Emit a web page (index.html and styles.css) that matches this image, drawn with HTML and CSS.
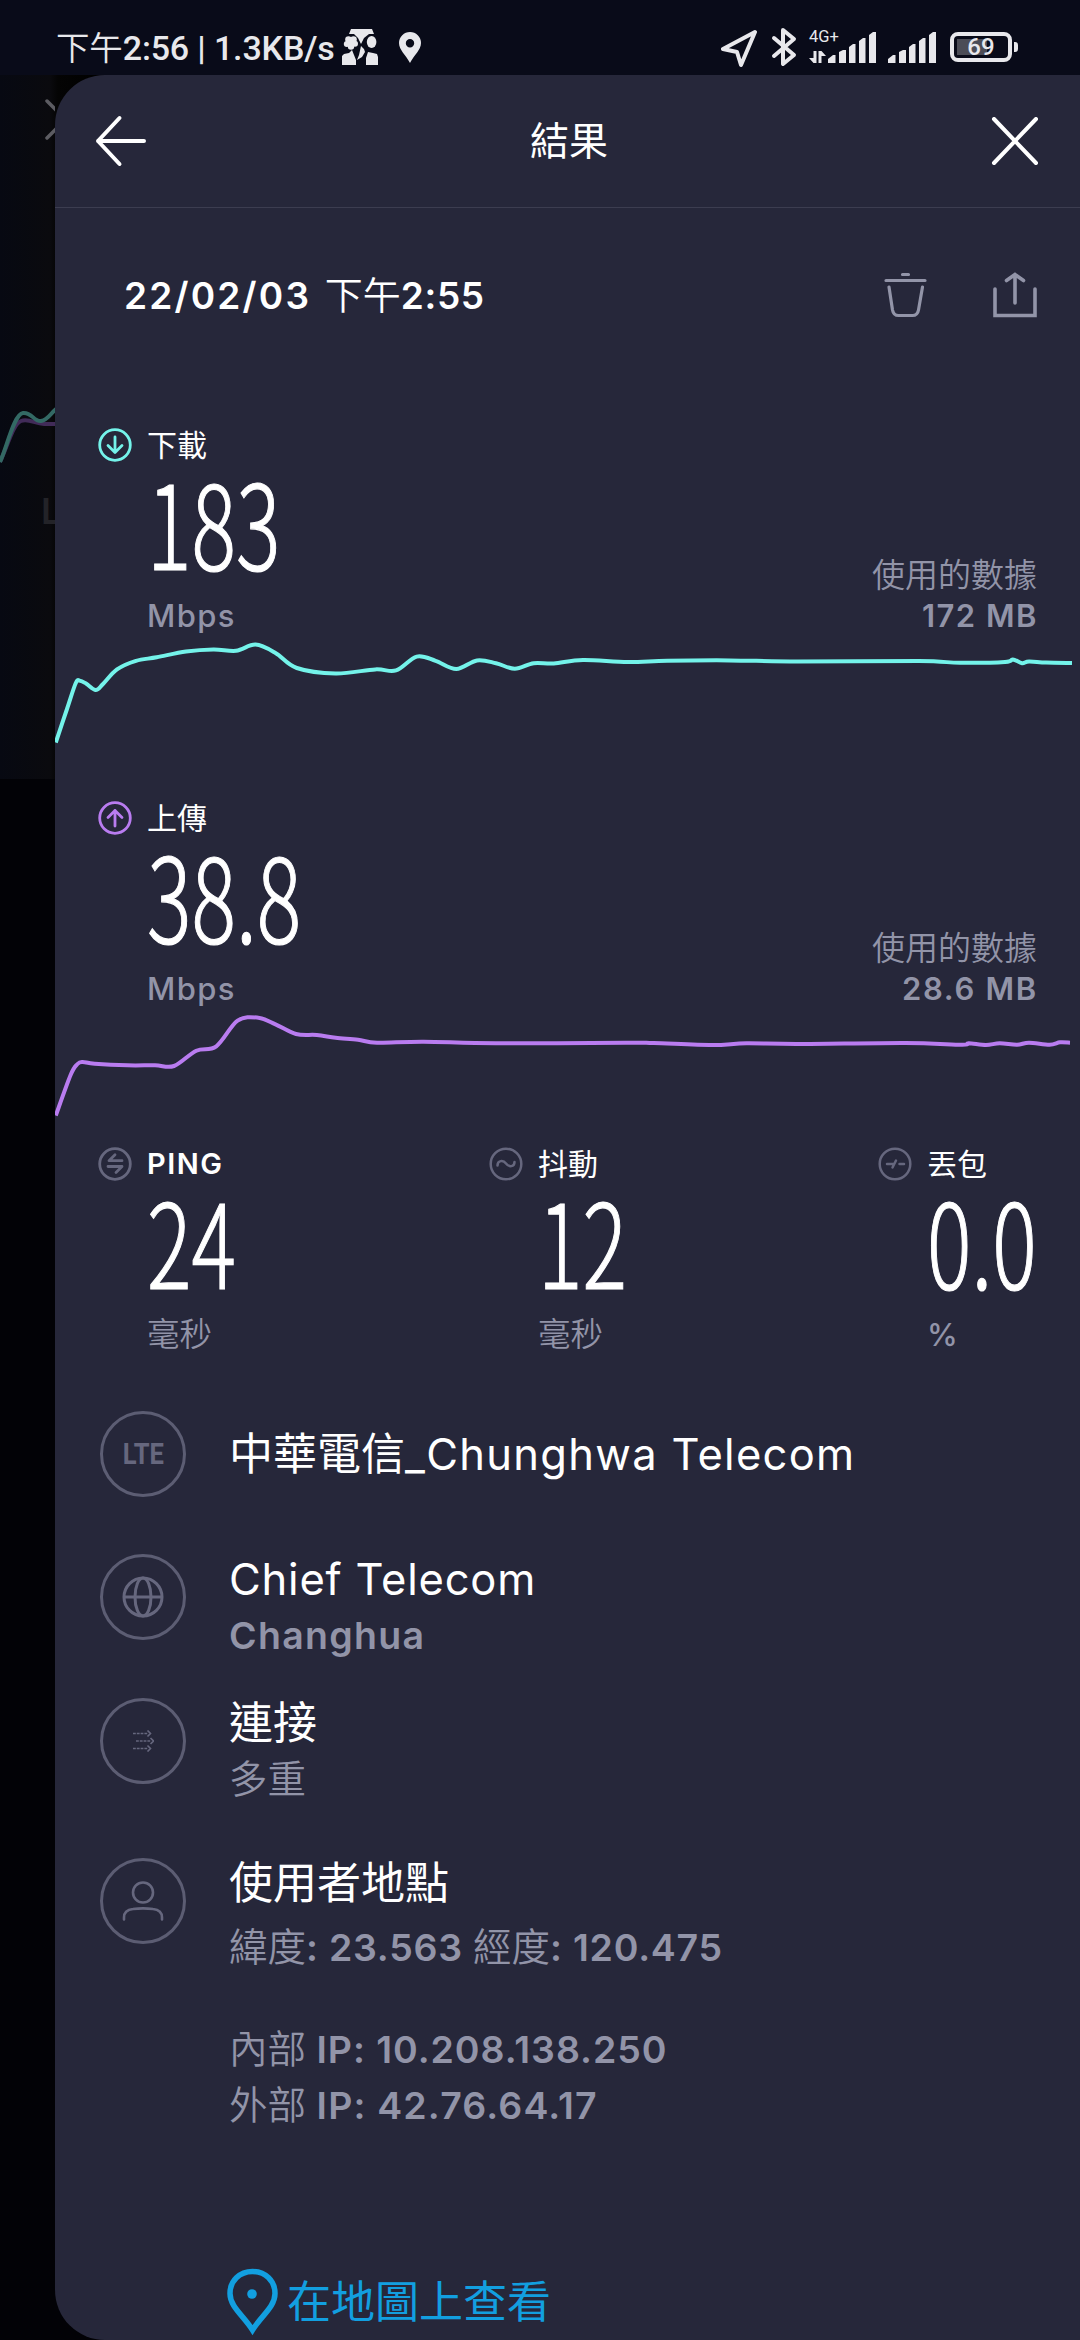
FILE: index.html
```html
<!DOCTYPE html>
<html lang="zh-Hant">
<head>
<meta charset="utf-8">
<title>結果</title>
<link rel="stylesheet" href="styles.css">
</head>
<body>
<div class="phone">
  <header class="status">
    <div class="status-left">
      <span class="clock"><span class="clock-cjk">下午</span>2:56 | 1.3KB/s</span>
      <svg class="ico-app" width="36" height="36" viewBox="0 0 36 36" fill="#e8e8ec">
        <path d="M9 0h21l2 5h-5l-5 4-3 6-3-6-4-4H7z"/>
        <circle cx="6.500" cy="10.500" r="3.300"/><circle cx="11.500" cy="10.500" r="3.300"/><circle cx="4.800" cy="15" r="3"/><circle cx="13" cy="14.800" r="3"/><circle cx="9" cy="17.500" r="3.200"/><circle cx="9" cy="13.500" r="4"/>
        <ellipse cx="29.600" cy="13" rx="4.800" ry="6"/>
        <path d="M19 17l3 3 1 3-3 5-5 3 2-5z"/>
        <path d="M0 36v-9l2-2 5-1 3-3 2 5 2 5v5zM24 36v-7l2-6 5 1 4 1 1 3v8z"/>
      </svg>
      <svg class="ico-pin" width="22" height="31" viewBox="0 0 22 31"><path fill="#e8e8ec" fill-rule="evenodd" d="M11 0a11 11 0 0 1 11 11c0 7-7 12-11 20C7 23 0 18 0 11A11 11 0 0 1 11 0zm0 7a4.200 4.200 0 1 0 0 8.400a4.200 4.200 0 0 0 0-8.400z"/></svg>
    </div>
    <div class="status-right">
      <svg width="37" height="39" viewBox="0 0 37 39" fill="none" stroke="#e8e8ec" stroke-width="4" stroke-linejoin="round"><path d="M34 3L2 20l14 3 4 13z"/></svg>
      <svg class="ico-bt" width="26" height="40" viewBox="0 0 26 40" fill="none" stroke="#e8e8ec" stroke-width="4" stroke-linejoin="round" stroke-linecap="round"><path d="M3 11l20 17-11 9V3l11 9L3 29"/></svg>
      <div class="cell">
        <span class="net">4G+</span>
        <svg width="17" height="12" viewBox="0 0 17 12" fill="#e8e8ec"><path d="M4.500 0h3v12h-3L0 7h4.500zM9.500 12h3V5H17l-4.500-5h-3z"/></svg>
      </div>
      <svg class="bars" width="48" height="31" viewBox="0 0 48 31" fill="#e8e8ec"><path d="M0 31v-4l5-4h2.500v8zM11 31V20l4-2h3v13zM21 31V15l4-3h2.500v19zM31 31V9l4-3h2.500v25zM41 31V3l4-3h3v31z"/></svg>
      <svg class="bars second" width="48" height="31" viewBox="0 0 48 31" fill="#e8e8ec"><path d="M0 31v-4l5-4h2.500v8zM11 31V20l4-2h3v13zM21 31V15l4-3h2.500v19zM31 31V9l4-3h2.500v25zM41 31V3l4-3h3v31z"/></svg>
      <div class="battery"><span class="level">69</span></div>
      <div class="nub"></div>
    </div>
  </header>

  <div class="stage">
    <aside class="under">
      <svg width="55" height="704" viewBox="0 75 55 704" fill="none">
        <path d="M47 101l9 9M47 138l9-9" stroke="#5c5c62" stroke-width="3.500" stroke-linecap="round"/>
        <path d="M0 462C8 445 13 424 21 421S35 424 44 424H56" stroke="#412b58" stroke-width="4"/>
        <path d="M0 462C7 447 14 414 23 413S34 422 41 421 50 414 56 409" stroke="#336964" stroke-width="4"/>
      </svg>
      <span class="ghost">L</span>
    </aside>

    <main class="sheet">
      <div class="bar">
        <svg width="52" height="52" viewBox="0 0 52 52" fill="none" stroke="#fff" stroke-width="4" stroke-linecap="round" stroke-linejoin="round"><path d="M49 26H3M24.500 3L3 26l21.500 23"/></svg>
        <h1>結果</h1>
        <svg width="48" height="48" viewBox="0 0 48 48" fill="none" stroke="#fff" stroke-width="4" stroke-linecap="round"><path d="M3 2l42 44M45 2L3 46"/></svg>
      </div>

      <div class="when">
        <div class="date"><span class="d1">22/02/03</span> 下午<span class="d2">2:55</span></div>
        <svg class="trash" width="43" height="46" viewBox="0 0 43 46" fill="none" stroke="#9294a8" stroke-width="3.200" stroke-linecap="round"><path d="M18.500 2.500h6M2 8.500h39M5 15l3.500 23q1 5.500 6 5.500h14q5 0 6-5.500L38.500 15"/></svg>
        <svg width="44" height="46" viewBox="0 0 44 46" fill="none" stroke="#9294a8" stroke-width="3.600" stroke-linecap="round"><path d="M2 17v26.500h40V17M22 31V2.500M13.500 8.500l8.500-6 8.500 6"/></svg>
      </div>

      <section class="speed">
        <div class="label">
          <svg class="ring" width="34" height="34" viewBox="0 0 34 34" fill="none" stroke="#74f3ea" stroke-width="2.800" stroke-linecap="round" stroke-linejoin="round"><circle cx="17" cy="17" r="15.300"/><path d="M17 9v15.500M10 17.500l7 7 7-7"/></svg>
          <span>下載</span>
        </div>
        <div class="num">183</div>
        <div class="foot"><span class="unit">Mbps</span><div class="used"><span class="cap">使用的數據</span><span class="mb mb-a">172 MB</span></div></div>
        <svg class="chart" width="1025" height="110" viewBox="55 640 1025 110"><path class="line down" data-points="55.8,742.500 67,709 75.800,683 80,680.700 86,683.500 95.700,690 103,684 117,669.400 136,660.800 156.700,657.300 186,651.500 213.500,649.400 236,650.800 255.500,644.600 275.500,652.900 296.800,668 335.700,673.500 375.300,669.400 396,670.400 416.700,656.600 435.600,660.800 456.300,669 477,660.400 496,663.200 514.800,668.700 533.700,663.200 553.800,663.500 583,660 627.800,662.100 667.400,660.800 729.400,660.400 798,661.500 918.800,661 960,662.800 1005,662 1012.800,659.400 1022,663.200 1029,661.500 1046,662.500 1072,663"/></svg>
      </section>

      <section class="speed">
        <div class="label">
          <svg class="ring" width="34" height="34" viewBox="0 0 34 34" fill="none" stroke="#b97cf0" stroke-width="2.800" stroke-linecap="round" stroke-linejoin="round"><circle cx="17" cy="17" r="15.300"/><path d="M17 25V9.500M10 16.500l7-7 7 7"/></svg>
          <span>上傳</span>
        </div>
        <div class="num">38.8</div>
        <div class="foot"><span class="unit">Mbps</span><div class="used"><span class="cap">使用的數據</span><span class="mb mb-b">28.6 MB</span></div></div>
        <svg class="chart" width="1025" height="110" viewBox="55 1013 1025 110"><path class="line up" data-points="55.8,1115.500 70.600,1075 77.500,1064 82.600,1062 94.700,1063.700 127.400,1065.300 155,1065.300 174,1066 196.300,1050.700 216.300,1046.300 237.600,1020.700 258.300,1017.700 275.500,1024.300 296,1034 316.800,1035 335.700,1037.700 358,1039.700 377,1042.700 423.500,1041.700 496,1043.300 626,1042.700 653.600,1043 712,1045 746.600,1043.300 798,1044 905,1043 961.800,1044.700 968.700,1043.300 986,1045 999.700,1043.300 1017,1044.700 1029,1042.700 1049.600,1044.700 1060,1042.300 1070,1042.700"/></svg>
      </section>

      <section class="stats">
        <div>
          <div class="label"><svg class="ring" width="34" height="34" viewBox="0 0 34 34" fill="none" stroke="#66677e" stroke-width="2.800" stroke-linecap="round" stroke-linejoin="round"><circle cx="17" cy="17" r="15.300"/><path d="M24 13.700H11l6-6M10 19.500h14l-6 6"/></svg><span class="ping">PING</span></div>
          <div class="num">24</div>
          <div class="munit">毫秒</div>
        </div>
        <div>
          <div class="label"><svg class="ring" width="34" height="34" viewBox="0 0 34 34" fill="none" stroke="#66677e" stroke-width="2.500" stroke-linecap="round"><circle cx="17" cy="17" r="15.300"/><path d="M8.500 18.500c0-5 5.500-6 8.500-2s8.500 3.500 8.500-1.500"/></svg><span>抖動</span></div>
          <div class="num">12</div>
          <div class="munit">毫秒</div>
        </div>
        <div>
          <div class="label"><svg class="ring" width="34" height="34" viewBox="0 0 34 34" fill="none" stroke="#66677e" stroke-width="2.500" stroke-linecap="round"><circle cx="17" cy="17" r="15.300"/><path d="M9 17h6M14.500 20.500l3.500-7M21.500 17H26"/></svg><span>丟包</span></div>
          <div class="num">0.0</div>
          <div class="munit pct">%</div>
        </div>
      </section>

      <section class="info">
        <div class="row r1">
          <div class="disc"><span class="lte">LTE</span></div>
          <div class="text"><div class="big">中華電信<span class="name-a">_Chunghwa Telecom</span></div></div>
        </div>
        <div class="row r2">
          <div class="disc"><svg width="42" height="42" viewBox="0 0 42 42" fill="none" stroke="#66677e" stroke-width="3"><circle cx="21" cy="21" r="19"/><ellipse cx="21" cy="21" rx="8" ry="19"/><path d="M2 21h38"/></svg></div>
          <div class="text"><div class="big"><span class="name-b">Chief Telecom</span></div><div class="sub"><span class="place">Changhua</span></div></div>
        </div>
        <div class="row r3">
          <div class="disc"><svg width="22" height="22" viewBox="0 0 22 22" fill="none" stroke="#66677e" stroke-width="1.600"><path d="M1 3.500h15M4 11h15M1 18.500h15" stroke-dasharray="2.800 1"/><path d="M15.500 .5l3 3-3 3M18.500 8l3 3-3 3M15.500 15.500l3 3-3 3"/></svg></div>
          <div class="text"><div class="big">連接</div><div class="sub">多重</div></div>
        </div>
        <div class="row r4">
          <div class="disc"><svg width="44" height="42" viewBox="0 0 44 42" fill="none" stroke="#66677e" stroke-width="2.600" stroke-linecap="round"><circle cx="22" cy="12.500" r="10"/><path d="M3 39.500v-2c0-6 4-8 9-8.500q10-1.300 20 0c5 .5 9 2.500 9 8.500v2"/></svg></div>
          <div class="text">
            <div class="big">使用者地點</div>
            <div class="sub">緯度<span class="geo">: 23.563 </span>經度<span class="geo">: 120.475</span></div>
            <div class="sub ip first">內部<span class="geo ip-a"> IP: 10.208.138.250</span></div>
            <div class="sub ip">外部<span class="geo ip-b"> IP: 42.76.64.17</span></div>
            <a class="map"><svg width="53" height="68" viewBox="0 0 53 68"><path d="M26.500 3.500C13.500 3.500 4 13 4 25.500 4 39 18 48 26.500 62 35 48 49 39 49 25.500 49 13 39.500 3.500 26.500 3.500z" fill="none" stroke="#129fe0" stroke-width="5.500"/><circle cx="26" cy="26" r="4.800" fill="#129fe0"/></svg><span>在地圖上查看</span></a>
          </div>
        </div>
      </section>
    </main>
  </div>
</div>
<script src="chart.js"></script>
</body>
</html>
```
FILE: styles.css
```css
* { box-sizing: border-box; margin: 0; padding: 0; }
body { width: 1080px; background: #020206; font-family: "Inter", "Noto Sans CJK TC", sans-serif; color: #fff; }
svg { display: block; flex: none; }
.phone { width: 1080px; height: 2340px; display: flex; flex-direction: column; overflow: hidden; }

.status { height: 75px; flex: none; background: #090b19; display: flex; justify-content: space-between; color: #e8e8ec; font-family: "Roboto", "Noto Sans CJK TC", sans-serif; }
.status-left { display: flex; padding-left: 56px; }
.clock { font-size: 34px; font-weight: 500; line-height: 40px; margin-top: 28px; width: 278px; white-space: nowrap; letter-spacing: -0.15px; }
.clock-cjk { font-family: "Noto Sans CJK TC", sans-serif; font-size: 33.500px; font-weight: 350; line-height: 1; }
.ico-app { margin: 29px 0 0 8px; }
.ico-pin { margin: 32px 0 0 21px; }
.status-right { display: flex; padding-right: 62px; }
.status-right > svg { margin-top: 29px; }
.status-right > .ico-bt { margin: 27px 0 0 13px; }
.cell { width: 31px; height: 34px; margin: 29px 0 0 12px; display: flex; flex-direction: column; justify-content: space-between; }
.net { font-size: 16.500px; line-height: 16px; white-space: nowrap; }
.status-right > .bars { margin: 32px 0 0 -12px; }
.status-right > .bars.second { margin-left: 12px; }
.battery { width: 62px; height: 30px; margin: 32px 0 0 14px; border: 4px solid #e8e8ec; border-radius: 8px; display: flex; align-items: center; justify-content: center; background: linear-gradient(#4b4c56, #4b4c56) 3px 3px / 30px 16px no-repeat; }
.level { font-size: 24px; font-weight: 500; line-height: 24px; }
.nub { width: 4px; height: 10px; margin: 42px 0 0 2px; border-radius: 0 3px 3px 0; background: #e8e8ec; }

.stage { display: grid; grid-template-columns: 55px 1025px; height: 2265px; flex: none; background: #020206; }
.under { position: relative; height: 704px; width: 105px; background: linear-gradient(90deg, #070912, #0a0a0e 50px, #040404 58px, #000); overflow: hidden; }
.ghost { position: absolute; left: 41px; top: 414px; width: 14px; overflow: hidden; font-size: 36px; line-height: 44px; font-weight: 600; color: #232328; }

.sheet { position: relative; background: #26273a; border-radius: 50px 0 0 50px; height: 2265px; }
.bar { height: 133px; border-bottom: 1px solid #3c3d50; display: flex; align-items: center; justify-content: space-between; padding: 0 41px 0 40px; }
h1 { font-size: 39px; font-weight: 400; line-height: 56px; }

.when { height: 174px; padding: 61px 43px 0 69px; display: flex; }
.date { flex: 1; font-size: 38px; line-height: 52px; font-weight: 350; white-space: pre; }
.d1, .d2 { font-size: 37px; font-weight: 600; letter-spacing: 0.600px; }
.d1 { letter-spacing: 2.200px; margin-right: 3px; }
.trash { margin-right: 66px; }
.when svg { margin-top: 3px; }

.speed { height: 373px; padding-left: 43px; }
.label { display: flex; align-items: center; height: 40px; gap: 15px; font-size: 30px; line-height: 40px; }
.speed .label { padding-top: 43px; height: 83px; }
.num { margin-left: 49px; height: 108px; line-height: 108px; font-family: "Noto Sans CJK TC", sans-serif; font-weight: 300; font-size: 117px; -webkit-text-stroke: 1.200px #fff; transform: scaleX(0.71); transform-origin: left; white-space: nowrap; }
.foot { display: flex; justify-content: space-between; align-items: flex-end; height: 40px; margin-top: 23px; padding: 0 43px 0 49px; color: #9294a8; }
.unit { font-size: 31px; line-height: 40px; font-weight: 500; letter-spacing: 1.400px; }
.used { display: flex; flex-direction: column; align-items: flex-end; }
.cap { font-size: 33px; line-height: 42px; font-weight: 350; }
.mb { font-size: 31px; line-height: 40px; font-weight: 600; letter-spacing: 1.500px; margin-right: -1px; }
.mb-b { letter-spacing: 1.700px; }
.chart { margin-left: -43px; margin-top: 4px; }
.line { fill: none; stroke-width: 4; stroke-linejoin: round; }
.down { stroke: #74f3ea; }
.up { stroke: #b97cf0; }

.stats { display: grid; grid-template-columns: 391px 389px 1fr; padding: 16px 0 0 43px; height: 283px; }
.ping { font-size: 29px; font-weight: 600; letter-spacing: 1.500px; }
.munit { margin: 19px 0 0 49px; font-size: 32.500px; line-height: 48px; font-weight: 350; color: #9294a8; }
.pct { font-size: 31px; font-weight: 500; }

.row { display: flex; padding-left: 45px; gap: 43px; }
.disc { width: 86px; height: 86px; flex: none; border: 3px solid #5c5d73; border-radius: 50%; display: flex; align-items: center; justify-content: center; }
.lte { font-family: "Roboto", sans-serif; font-size: 29px; font-weight: 700; color: #66677e; transform: scaleX(0.88); }
.text { margin-top: -3px; }
.big { font-size: 44px; line-height: 56px; height: 56px; white-space: nowrap; }
.sub { font-size: 38.500px; line-height: 56px; height: 56px; font-weight: 350; color: #9294a8; white-space: pre; }
.geo, .place { font-size: 37.500px; font-weight: 600; letter-spacing: 0.750px; }
.place { letter-spacing: 1.300px; }
.ip-a { letter-spacing: 0.950px; }
.ip-b { letter-spacing: 1.150px; }
.name-a { font-size: 43.500px; letter-spacing: 1.300px; }
.name-b { font-size: 43.500px; letter-spacing: 0.800px; }
.r1 { height: 143px; }
.r1 .text { padding-top: 18px; }
.r2 { height: 144px; }
.r3 { height: 160px; }
.r4 .sub { margin-top: 8px; }
.r4 .ip { margin-top: 0; }
.r4 .ip.first { margin-top: 46px; }
.map { display: flex; margin-top: 135px; margin-left: -3px; gap: 8px; font-size: 44px; line-height: 68px; color: #129fe0; }
```
FILE: chart.js
```js
// Draws each throughput line as a smooth curve through its samples.
document.querySelectorAll('.line').forEach(function (el) {
  var p = el.dataset.points.split(' ').map(function (s) { return s.split(',').map(Number); });
  var d = 'M' + p[0];
  for (var i = 0; i < p.length - 1; i++) {
    var a = p[Math.max(i - 1, 0)], b = p[i], c = p[i + 1], e = p[Math.min(i + 2, p.length - 1)];
    d += 'C' + [b[0] + (c[0] - a[0]) / 6, b[1] + (c[1] - a[1]) / 6,
                c[0] - (e[0] - b[0]) / 6, c[1] - (e[1] - b[1]) / 6, c[0], c[1]].join(' ');
  }
  el.setAttribute('d', d);
});
```
